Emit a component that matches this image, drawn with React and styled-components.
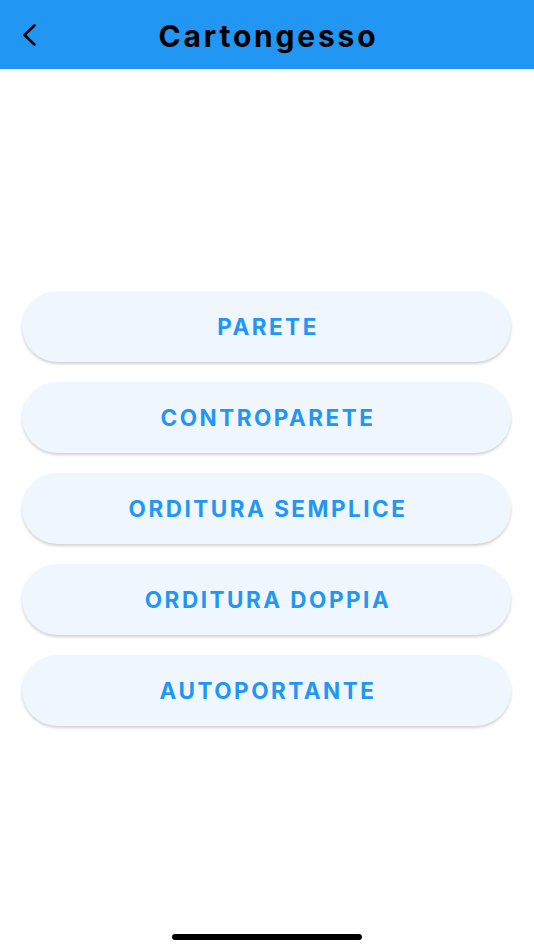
import React from 'react';
import styled, { createGlobalStyle } from 'styled-components';

const items = ['PARETE', 'CONTROPARETE', 'ORDITURA SEMPLICE', 'ORDITURA DOPPIA', 'AUTOPORTANTE'];

const App = () => (
  <Screen>
    <GlobalStyle />
    <Header>
      <BackButton aria-label="Indietro">
        <svg width="20" height="24" viewBox="0 0 20 24" fill="none">
          <path d="M14.5 2.5 L4.5 12 L14.5 21.5" stroke="#000" strokeWidth="2.6" strokeLinecap="round" strokeLinejoin="round" />
        </svg>
      </BackButton>
      <Title>Cartongesso</Title>
    </Header>
    <Menu>
      {items.map((label) => (
        <MenuButton key={label}>{label}</MenuButton>
      ))}
    </Menu>
    <HomeIndicator />
  </Screen>
);

const GlobalStyle = createGlobalStyle`
  html, body {
    margin: 0;
    padding: 0;
    background: #ffffff;
  }
  body {
    font-family: Inter, "Liberation Sans", Arial, sans-serif;
  }
`;

const Screen = styled.div`
  display: flex;
  flex-direction: column;
  width: 534px;
  height: 950px;
  background: #ffffff;
  overflow: hidden;
`;

const Header = styled.header`
  position: relative;
  display: flex;
  align-items: center;
  justify-content: center;
  height: 69px;
  flex-shrink: 0;
  background: #2196f3;
`;

const BackButton = styled.button`
  position: absolute;
  left: 20px;
  top: 23px;
  display: flex;
  padding: 0;
  border: none;
  background: none;
`;

const Title = styled.h1`
  margin: 0 0 -2px 3px;
  font-family: Inter, "Liberation Sans", Arial, sans-serif;
  font-size: 30px;
  font-weight: 700;
  letter-spacing: 2.8px;
  color: #000000;
`;

const Menu = styled.div`
  display: flex;
  flex-direction: column;
  gap: 20px;
  padding: 222px 23px 0 22px;
`;

const MenuButton = styled.button`
  display: flex;
  align-items: center;
  justify-content: center;
  height: 71px;
  padding: 0 0 0 3px;
  border: none;
  border-radius: 36px;
  background: #f0f6fd;
  box-shadow: 0 2px 3px rgba(0, 0, 0, 0.18);
  font-family: Inter, "Liberation Sans", Arial, sans-serif;
  font-size: 22.5px;
  font-weight: 700;
  letter-spacing: 2.5px;
  color: #2196f3;
`;

const HomeIndicator = styled.div`
  width: 190px;
  height: 6px;
  margin: auto auto 10px;
  border-radius: 3px;
  background: #000000;
`;

export default App;
